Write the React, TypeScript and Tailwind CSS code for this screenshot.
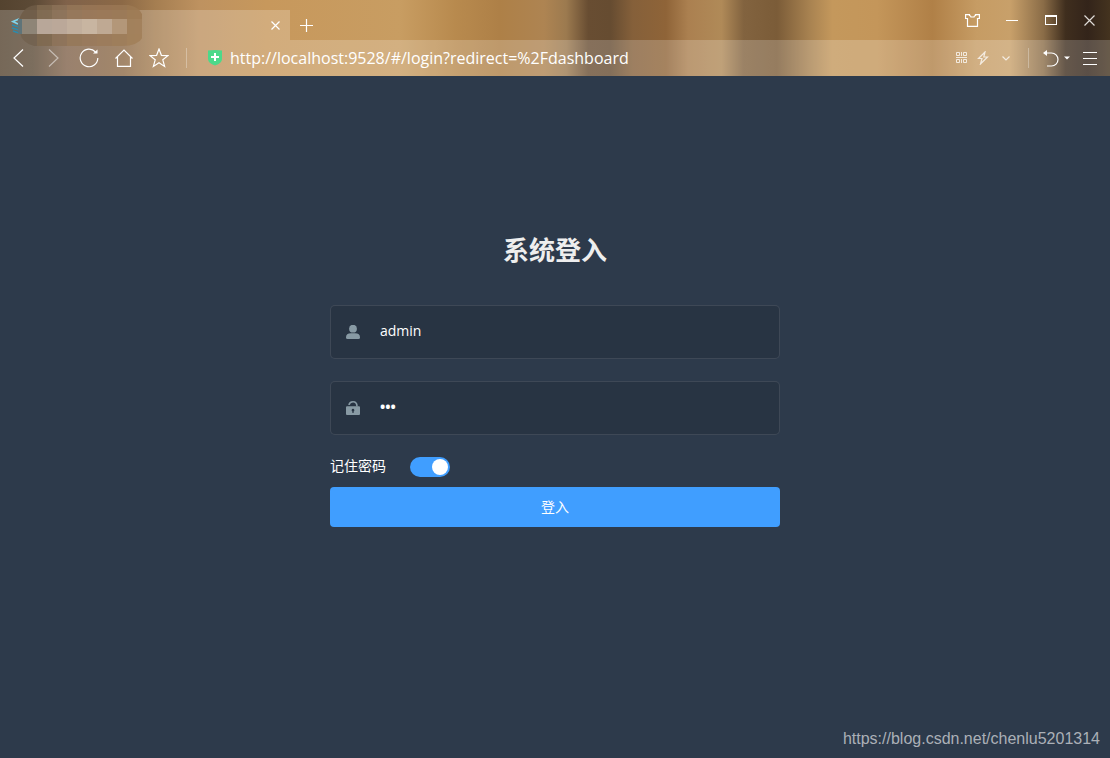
import { useState } from 'react';

const iconProps = {
  fill: 'none',
  stroke: 'currentColor',
  strokeWidth: 1.2,
};

const titleBlocks = [
  '#5f7479', '#8e8577', '#b8a799', '#bba899', '#c2af9d', '#c8b5a1', '#bfa993', '#b39779',
];

const hazeBlocks = [
  ['#6f5c47', '#806a51', '#8c7259', '#967759', '#997757', '#9a7756', '#9b7855', '#9d7953'],
  ['#71624f', '#826c53', '#8b725a', '#95775c', '#9a7a5c', '#9c7c5b', '#9f7e5b', '#a17f5a'],
  ['#73624f', '#7f694f', '#8d7359', '#967859', '#997a5b', '#9c7b5a', '#9e7d59', '#a17f59'],
];

function TabTitle() {
  return (
    <svg width="150" height="42" viewBox="0 0 150 42" shapeRendering="crispEdges" aria-hidden="true">
      <defs>
        <clipPath id="haze">
          <path d="M20 12 Q25 0 38 0 H128 Q142 2 143 14 V32 Q138 41 122 41 H34 Q22 38 20 28 Z" />
        </clipPath>
      </defs>
      <g clipPath="url(#haze)" opacity="0.85">
        {hazeBlocks.map((row, y) =>
          row.map((color, x) => (
            <rect key={`${x}-${y}`} x={22 + x * 15 - (x === 0 ? 4 : 0)} y={y * 15 - (y ? 1 : 0)} width={x === 0 ? 19 : 15} height="15" fill={color} />
          ))
        )}
      </g>
      <g shapeRendering="auto" fill="none">
        <path d="M19 14 L13 16.500 L18 19" stroke="#7fd3ea" strokeWidth="1.800" />
        <path d="M12 20 l7 2 M12 23 l7 2 M13 26 l6 2" stroke="#2b8bad" strokeWidth="1.800" />
      </g>
      {titleBlocks.map((color, i) => (
        <rect key={i} x={i === 0 ? 18 : 7 + i * 15} y="14" width={i === 0 ? 4 : 15} height="15" fill={color} />
      ))}
    </svg>
  );
}

function TitleBar() {
  return (
    <div className="flex h-10 items-end justify-between">
      <div className="flex items-center">
        <div className="relative flex h-[30px] w-[290px] items-center justify-end bg-white/20 pr-2">
          <div className="absolute -top-[5px] left-0">
            <TabTitle />
          </div>
          <button aria-label="Close tab" className="p-[2px]">
            <svg width="9" height="9" viewBox="0 0 9 9" {...iconProps}>
              <path d="M0.500 0.500 L8.500 8.500 M8.500 0.500 L0.500 8.500" />
            </svg>
          </button>
        </div>
        <button aria-label="New tab" className="px-[10px]">
          <svg width="13" height="13" viewBox="0 0 13 13" {...iconProps}>
            <path d="M6.500 0 V13 M0 6.500 H13" />
          </svg>
        </button>
      </div>
      <div className="flex h-full pr-px">
        <button aria-label="Skins" className="flex w-[39px] items-center justify-center">
          <svg width="15" height="13" viewBox="0 0 15 13" {...iconProps}>
            <path d="M0.600 0.600 H4.500 V1.500 Q6 2 6 3 H9 Q9 2 10.500 1.500 V0.600 H14.400 V4.500 H12.500 V12.400 H2.500 V4.500 H0.600 Z" />
          </svg>
        </button>
        <button aria-label="Minimize" className="flex w-[39px] items-center justify-center">
          <span className="h-px w-3 bg-white" />
        </button>
        <button aria-label="Maximize" className="flex w-[39px] items-center justify-center">
          <span className="h-[10px] w-3 border border-t-2 border-white" />
        </button>
        <button aria-label="Close" className="flex w-[39px] items-center justify-center text-[#e0dcd8]">
          <svg width="11" height="11" viewBox="0 0 11 11" {...iconProps}>
            <path d="M0.500 0.500 L10.500 10.500 M10.500 0.500 L0.500 10.500" />
          </svg>
        </button>
      </div>
    </div>
  );
}

function Toolbar() {
  const [url, setUrl] = useState('http://localhost:9528/#/login?redirect=%2Fdashboard');
  const navButton = 'flex h-full w-[35px] shrink-0 items-center justify-center';

  return (
    <div className="flex h-9 items-center bg-white/20 pl-px">
      <button aria-label="Back" className={navButton}>
        <svg width="11" height="18" viewBox="0 0 11 18" {...iconProps}>
          <path d="M10 0.500 L1 9 L10 17.500" />
        </svg>
      </button>
      <button aria-label="Forward" className={`${navButton} opacity-50`}>
        <svg width="11" height="18" viewBox="0 0 11 18" {...iconProps}>
          <path d="M1 0.500 L10 9 L1 17.500" />
        </svg>
      </button>
      <button aria-label="Reload" className={navButton}>
        <svg width="20" height="20" viewBox="0 0 20 20" {...iconProps}>
          <path d="M16.500 4 A8.800 8.800 0 1 0 18.800 10" />
          <path d="M18.500 1.500 V5.500 H14 Z" fill="currentColor" stroke="none" />
        </svg>
      </button>
      <button aria-label="Home" className={navButton}>
        <svg width="18" height="18" viewBox="0 0 18 18" {...iconProps}>
          <path d="M0.500 9.500 L9 1 L17.500 9.500 M2.500 8 V17.400 H15.500 V8" />
        </svg>
      </button>
      <button aria-label="Bookmark" className={navButton}>
        <svg width="20" height="20" viewBox="0 0 20 20" {...iconProps}>
          <path d="M10 1 L12.400 7.300 L19 7.600 L13.800 11.800 L15.600 18.400 L10 14.700 L4.400 18.400 L6.200 11.800 L1 7.600 L7.600 7.300 Z" />
        </svg>
      </button>
      <span className="ml-[10px] h-5 w-px shrink-0 bg-white/30" />
      <svg className="ml-[21px] shrink-0" width="14" height="16" viewBox="0 0 14 16" aria-hidden="true">
        <path d="M0 0.500 Q7 -0.500 14 0.500 V9 Q14 13 7 15.500 Q0 13 0 9 Z" fill="#4cd98a" />
        <path d="M7 3 V11 M3 7 H11" stroke="#fff" strokeWidth="2" />
      </svg>
      <input
        type="text"
        aria-label="Address"
        value={url}
        onChange={(e) => setUrl(e.target.value)}
        className="ml-2 min-w-0 flex-1 bg-transparent text-[16px] text-white outline-none"
      />
      <div className="flex items-center gap-[9px] pr-[18px] text-white/75">
        <button aria-label="QR code">
          <svg width="12" height="12" viewBox="0 0 12 12" {...iconProps} strokeWidth="1">
            <path d="M0.500 0.500 h3 v3 h-3 Z M7.500 0.500 h3 v3 h-3 Z M0.500 7.500 h3 v3 h-3 Z M7.500 7.500 h3 v3 h-3 Z M0 5.500 H11 M5.500 0 V4 M5.500 7 V11" />
          </svg>
        </button>
        <button aria-label="Speed mode">
          <svg width="12" height="14" viewBox="0 0 12 14" {...iconProps}>
            <path d="M8 1 L1.500 7.500 H5 L3.500 13 L10.500 6 H6.800 Z" />
          </svg>
        </button>
        <button aria-label="More" className="pl-1">
          <svg width="8" height="5" viewBox="0 0 8 5" {...iconProps}>
            <path d="M0.500 0.500 L4 4 L7.500 0.500" />
          </svg>
        </button>
      </div>
      <span className="h-5 w-px bg-white/30" />
      <div className="flex items-center pr-[13px]">
        <button aria-label="Undo" className="ml-[14px] flex items-center gap-[5px]">
          <svg width="16" height="17" viewBox="0 0 16 17" {...iconProps}>
            <path d="M2 3 H8.500 A6.500 6.500 0 0 1 8.500 16 H4" />
            <path d="M0 3 L4 0 V6 Z" fill="currentColor" stroke="none" />
          </svg>
          <svg width="6" height="4" viewBox="0 0 6 4" fill="currentColor">
            <path d="M0 0.500 H6 L3 3.500 Z" />
          </svg>
        </button>
        <button aria-label="Menu" className="ml-[13px] flex flex-col gap-[5px]">
          <span className="h-px w-[14px] bg-white" />
          <span className="h-px w-[14px] bg-white" />
          <span className="h-px w-[14px] bg-white" />
        </button>
      </div>
    </div>
  );
}

function LoginForm() {
  const [username, setUsername] = useState('admin');
  const [password, setPassword] = useState('123');
  const [remember, setRemember] = useState(true);

  const field = 'mb-[22px] flex h-[54px] items-center rounded-[5px] border border-white/10 bg-black/10 text-[#889aa4]';
  const input = 'h-full min-w-0 flex-1 bg-transparent pr-4 pl-5 pb-[3px] text-[14px] text-white outline-none';

  return (
    <form onSubmit={(e) => e.preventDefault()} className="mx-auto w-full max-w-[450px] pt-[159px]">
      <h3 className="mb-10 text-center text-[26px] leading-[30px] font-bold text-[#eee]">系统登入</h3>

      <div className={field}>
        <label htmlFor="username" aria-label="Username" className="pl-[15px]">
          <svg width="14" height="14" viewBox="0 0 14 14" fill="currentColor">
            <circle cx="7" cy="3.700" r="3.900" />
            <path d="M0 12.500 Q0 8.300 5 8.300 H9 Q14 8.300 14 12.500 Q14 14 12.500 14 H1.500 Q0 14 0 12.500 Z" />
          </svg>
        </label>
        <input id="username" type="text" value={username} onChange={(e) => setUsername(e.target.value)} className={input} />
      </div>

      <div className={field}>
        <label htmlFor="password" aria-label="Password" className="pl-[15px]">
          <svg width="14" height="14" viewBox="0 0 14 14" fill="currentColor">
            <path d="M3 4 Q3.500 0.800 7 0.800 Q11 0.800 11 5.500" fill="none" stroke="currentColor" strokeWidth="1.600" />
            <path fillRule="evenodd" d="M1 5.300 H13 Q14 5.300 14 6.300 V13 Q14 14 13 14 H1 Q0 14 0 13 V6.300 Q0 5.300 1 5.300 Z M7 7.800 A1.500 1.500 0 0 0 6.400 10.600 V12 H7.600 V10.600 A1.500 1.500 0 0 0 7 7.800 Z" />
          </svg>
        </label>
        <input id="password" type="password" value={password} onChange={(e) => setPassword(e.target.value)} className={`${input} font-bold`} />
      </div>

      <div className="mb-[10px] flex h-5 items-center gap-6 text-[14px] text-white">
        <label htmlFor="remember" className="pb-[3px]">记住密码</label>
        <span className="relative flex h-5 w-10">
          <input
            id="remember"
            type="checkbox"
            role="switch"
            checked={remember}
            onChange={(e) => setRemember(e.target.checked)}
            className="peer h-5 w-10 cursor-pointer appearance-none rounded-full bg-[#dcdfe6] checked:bg-[#409eff]"
          />
          <span className="pointer-events-none absolute top-[2px] left-[2px] size-4 rounded-full bg-white peer-checked:left-[22px]" />
        </span>
      </div>

      <button type="submit" className="h-10 w-full rounded bg-[#409eff] pb-[2px] text-[14px] text-white">
        登入
      </button>
    </form>
  );
}

export default function App() {
  return (
    <div className="relative flex min-h-screen flex-col bg-[#2d3a4b] font-['Open_Sans','Noto_Sans_CJK_SC',sans-serif]">
      <header className="bg-[linear-gradient(90deg,#54432f_0%,#5c4a36_3%,#80624a_6%,#8c6946_11%,#a57e51_14%,#be9260_18%,#c7985c_24%,#c89d62_36%,#b88a4e_41%,#ae8047_45%,#ae8452_49%,#9c7a4f_51%,#684d32_53%,#664c31_55%,#85603a_57%,#8f6438_60%,#ab8050_62%,#b08a58_65%,#82633f_67%,#7b5c38_70%,#a98351_73%,#c4985c_75%,#c4965a_79%,#b08047_84%,#c69c64_88%,#c8a06a_91%,#8a6c47_94%,#3f2e1e_96%,#33241a_98%,#44331f_100%)] text-white">
        <TitleBar />
        <Toolbar />
      </header>
      <main className="flex-1 px-4">
        <LoginForm />
      </main>
      <a
        href="https://blog.csdn.net/chenlu5201314"
        className="absolute right-[10px] bottom-[7px] font-['Liberation_Sans',Arial,sans-serif] text-[16px] text-[#abb0b7]"
      >
        https://blog.csdn.net/chenlu5201314
      </a>
    </div>
  );
}
